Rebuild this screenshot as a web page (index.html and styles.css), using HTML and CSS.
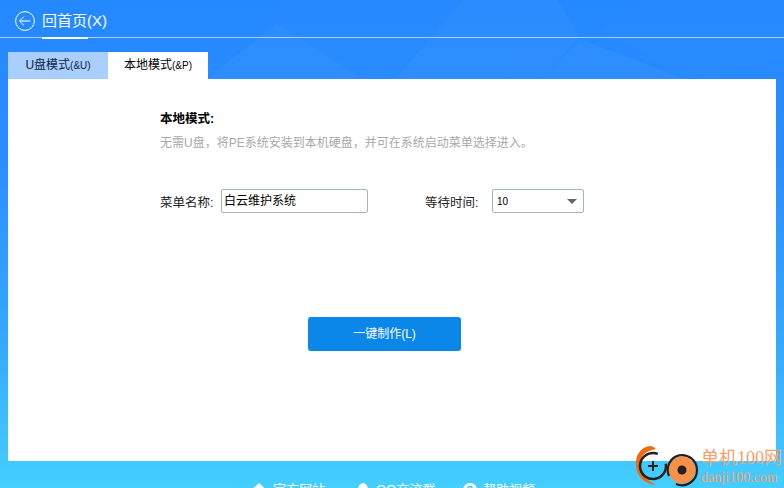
FILE: index.html
```html
<!DOCTYPE html>
<html lang="zh-CN">
<head>
    <meta charset="UTF-8">
    <title>本地模式</title>
    <link rel="stylesheet" href="styles.css">
</head>
<body>
    <div class="app">
        <!-- faint polygons in the blue background -->
        <svg class="bg-shapes" width="784" height="488" viewBox="0 0 784 488">
            <path d="M207 79L277 23L363 79Z" fill="#fff" opacity="0.035"/>
            <path d="M463 0H558L580 37L542 79H395Z" fill="#fff" opacity="0.035"/>
            <path d="M580 39L685 79H542Z" fill="#fff" opacity="0.035"/>
            <path d="M290 0H463L430 37L395 79H363L277 23Z" fill="#fff" opacity="0.012"/>
            <path d="M655 0H784V60L685 79L600 30Z" fill="#fff" opacity="0.01"/>
        </svg>

        <div class="topbar">
            <svg class="back-icon" width="20" height="20" viewBox="0 0 20 20">
                <circle cx="10" cy="10" r="9.4" fill="none" stroke="#fff" stroke-width="1"/>
                <path d="M15.5 10H4.8M9 5.6L4.6 10L9 14.4" fill="none" stroke="#fff" stroke-width="1"/>
            </svg>
            <div class="back-text">回首页(X)</div>
        </div>

        <div class="tabs">
            <div class="tab">U盘模式<span class="small-latin">(&amp;U)</span></div>
            <div class="tab tab-active">本地模式<span class="small-latin">(&amp;P)</span></div>
        </div>

        <div class="panel">
            <h2 class="panel-title">本地模式:</h2>
            <p class="panel-desc">无需U盘，将PE系统安装到本机硬盘，并可在系统启动菜单选择进入。</p>

            <div class="form-row">
                <label class="form-label">菜单名称:</label>
                <div class="text-input">白云维护系统</div>
                <label class="form-label wait-label">等待时间:</label>
                <div class="select-box">
                    <span>10</span>
                    <span class="select-arrow"></span>
                </div>
            </div>

            <div class="btn-row">
                <div class="btn">一键制作(L)</div>
            </div>
        </div>

        <div class="footer">
            <div class="footer-link link-site">
                <svg width="14" height="14" viewBox="0 0 14 14"><path d="M7 0L14 6.5H12V14H2V6.5H0Z" fill="#fff"/></svg>
                <span>官方网站</span>
            </div>
            <div class="footer-link link-qq">
                <svg width="12" height="14" viewBox="0 0 12 14"><ellipse cx="6" cy="7" rx="5" ry="7" fill="#fff"/></svg>
                <span>QQ交流群</span>
            </div>
            <div class="footer-link link-help">
                <svg width="14" height="14" viewBox="0 0 14 14"><circle cx="7" cy="7" r="7" fill="#fff"/><path d="M4.8 5.4C5 3 9.2 3 9.2 5.4C9.2 7 7 7 7 9" fill="none" stroke="#3fc4ff" stroke-width="1.5"/></svg>
                <span>帮助视频</span>
            </div>
        </div>

        <!-- watermark sits over the panel corner -->
        <div class="watermark">
            <svg width="66" height="44" viewBox="0 0 66 44">
                <path d="M15 2C5 3 0 12 1 22C2 32 9 40 21 41C13 37 5 31 5 21C5 12 10 7 21 5C19 3 17 2 15 2Z" fill="#f26a0c"/>
                <circle cx="18" cy="22" r="13" fill="none" stroke="#23211f" stroke-width="2.5" stroke-dasharray="68 14" transform="rotate(-10 18 22)"/>
                <path d="M18 17V27M13 22H23" stroke="#23211f" stroke-width="2"/>
                <circle cx="47" cy="26" r="13.5" fill="#f79049"/>
                <path d="M34 32A15 15 0 0 1 44 11.4A15 15 0 0 1 62 26A15 15 0 0 1 41 40" fill="none" stroke="#23211f" stroke-width="2.2"/>
                <circle cx="47" cy="26" r="4.5" fill="#23211f"/>
            </svg>
            <div class="watermark-text">
                <div class="watermark-name">单机100网</div>
                <div class="watermark-url">danji100.com</div>
            </div>
        </div>
    </div>
</body>
</html>
```

FILE: styles.css
```css
html, body {
    margin: 0;
    padding: 0;
    height: 100%;
    overflow: hidden;
}
body {
    font-family: "Liberation Sans", "Noto Sans CJK SC", sans-serif;
}
.app {
    position: relative;
    width: 784px;
    height: 488px;
    overflow: hidden;
    background: linear-gradient(180deg, #2488ff 0%, #2a8cff 30%, #36a8ff 70%, #44cfff 100%);
}
.bg-shapes {
    position: absolute;
    left: 0;
    top: 0;
}
.topbar {
    position: relative;
    height: 38px;
    box-sizing: border-box;
    padding-left: 15px;
    display: flex;
    align-items: flex-start;
    border-bottom: 1px solid #a8d0fd;
}
.back-icon {
    margin-top: 11px;
}
.back-text {
    margin-left: 7px;
    width: 46px;
    height: 28px;
    margin-top: 9px;
    white-space: nowrap;
    color: #fff;
    font-size: 15px;
    line-height: 24px;
    border-bottom: 2px solid #fff;
}
.tabs {
    position: relative;
    display: flex;
    margin: 14px 0 0 8px;
}
.tab {
    width: 100px;
    height: 27px;
    line-height: 27px;
    text-align: center;
    font-size: 12px;
    color: #10233f;
    background: #a8cffd;
}
.tab-active {
    background: #fff;
    color: #000;
}
.small-latin {
    font-size: 10px;
}
.panel {
    position: relative;
    width: 768px;
    height: 382px;
    margin-left: 8px;
    box-sizing: border-box;
    padding: 32px 0 0 152px;
    background: #fff;
}
.panel-title {
    margin: 0;
    font-size: 12.5px;
    font-weight: bold;
    line-height: 17px;
    color: #000;
}
.panel-desc {
    margin: 7px 0 0;
    font-size: 12px;
    line-height: 17px;
    color: #a9a9a9;
}
.form-row {
    display: flex;
    align-items: center;
    margin-top: 37px;
}
.form-label {
    width: 61px;
    font-size: 12.5px;
    color: #222;
}
.text-input {
    width: 147px;
    height: 24px;
    box-sizing: border-box;
    padding-left: 2px;
    border: 1px solid #a3b5c4;
    border-radius: 2px;
    font-size: 12px;
    line-height: 22px;
    color: #000;
}
.wait-label {
    margin-left: 57px;
    width: 67px;
}
.select-box {
    width: 92px;
    height: 24px;
    box-sizing: border-box;
    padding: 0 6px 0 4px;
    display: flex;
    align-items: center;
    justify-content: space-between;
    border: 1px solid #a3b5c4;
    border-radius: 2px;
    font-size: 10px;
    color: #000;
}
.select-arrow {
    width: 0;
    height: 0;
    border-left: 5px solid transparent;
    border-right: 5px solid transparent;
    border-top: 5px solid #666;
}
.btn-row {
    margin-top: 104px;
    margin-left: 148px;
}
.btn {
    width: 153px;
    height: 34px;
    line-height: 34px;
    text-align: center;
    border-radius: 3px;
    font-size: 12px;
    color: #fff;
    background: #0b87ea;
}
.footer {
    position: relative;
    display: flex;
    margin: 22px 0 0 252px;
}
.footer-link {
    display: flex;
    align-items: flex-start;
    gap: 7px;
    font-size: 13px;
    line-height: 16px;
    color: #fff;
}
.footer-link span {
    margin-top: -1px;
}
.link-site {
    width: 105px;
}
.link-qq {
    width: 106px;
}
.link-help {
    gap: 6px;
}
.watermark {
    position: absolute;
    left: 635px;
    top: 444px;
    display: flex;
}
.watermark-text {
    color: #f7a06a;
    font-family: "Liberation Serif", "Noto Sans CJK SC", serif;
}
.watermark-name {
    font-size: 18px;
    line-height: 20px;
    margin-top: 4px;
}
.watermark-url {
    font-size: 14px;
    line-height: 18px;
    margin-top: 1px;
}
```
